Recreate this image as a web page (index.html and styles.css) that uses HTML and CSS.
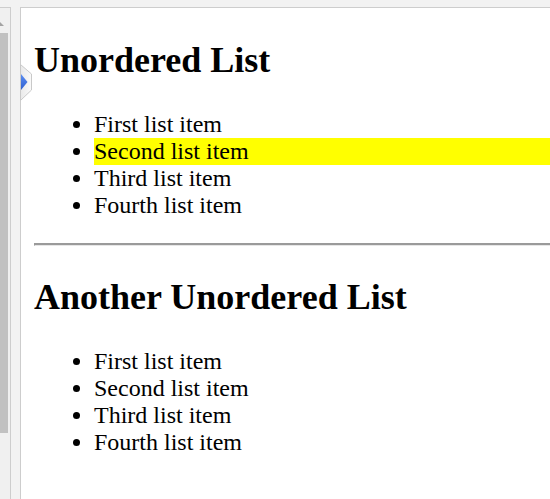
FILE: index.html
```html
<!DOCTYPE html>
<html>
<head>
<meta charset="utf-8">
<title>Lists</title>
<link rel="stylesheet" href="styles.css">
</head>
<body>
<div class="shell">
  <aside class="side">
    <div class="scroll">
      <svg class="arrow-up" width="8" height="6" viewBox="0 0 8 6"><path d="M0 5 L4 1 L8 5 Z" fill="#a3a3a3"/></svg>
      <div class="thumb"></div>
    </div>
  </aside>
  <main class="frame">
    <h2 class="title">Unordered List</h2>
    <ul class="list">
      <li>First list item</li>
      <li class="hl">Second list item</li>
      <li>Third list item</li>
      <li>Fourth list item</li>
    </ul>
    <hr class="rule">
    <h2 class="title">Another Unordered List</h2>
    <ul class="list">
      <li>First list item</li>
      <li>Second list item</li>
      <li>Third list item</li>
      <li>Fourth list item</li>
    </ul>
  </main>
  <svg class="tab" width="13" height="37" viewBox="0 0 13 37">
    <defs>
      <linearGradient id="tabfill" x1="0" y1="0" x2="1" y2="0">
        <stop offset="0" stop-color="#e9e9e9"/>
        <stop offset="1" stop-color="#fafafa"/>
      </linearGradient>
      <linearGradient id="blue" x1="0" y1="0" x2="0" y2="1">
        <stop offset="0" stop-color="#5b8ef2"/>
        <stop offset="1" stop-color="#2f5fd0"/>
      </linearGradient>
    </defs>
    <path d="M0.5 0.5 L11.5 10 L11.5 26 L0.5 36.5 Z" fill="url(#tabfill)" stroke="#c9c9c9"/>
    <path d="M1 10 L7.5 18 L1 26 Z" fill="url(#blue)"/>
  </svg>
</div>
</body>
</html>
```

FILE: styles.css
```css
html, body {
  margin: 0;
  padding: 0;
  height: 100%;
  overflow: hidden;
  background: #f2f2f2;
}

.shell {
  position: relative;
  display: flex;
  align-items: stretch;
  gap: 9px;
  padding-top: 7px;
  height: 100%;
  box-sizing: border-box;
}

.side {
  flex: none;
  width: 10px;
  border-top: 1px solid #cdcdcd;
  border-right: 1px solid #cdcdcd;
  background: #f0f0f0;
}

.scroll {
  display: flex;
  flex-direction: column;
  padding-top: 13px;
}

.arrow-up {
  display: block;
  margin-left: -4px;
}

.thumb {
  margin-top: 6px;
  width: 8px;
  height: 400px;
  background: #c1c1c1;
}

.frame {
  flex: 1;
  min-width: 0;
  border-top: 1px solid #cdcdcd;
  border-left: 1px solid #cdcdcd;
  background: #fff;
  padding: 31px 0 0 13px;
  box-sizing: border-box;
  font-family: "Liberation Serif", "Times New Roman", serif;
  color: #000;
}

.title {
  font-size: 36px;
  font-weight: bold;
  margin: 0 0 30px;
  white-space: nowrap;
}

.list {
  font-size: 24px;
  margin: 0 0 24px;
  padding-left: 60px;
}

.list li {
  white-space: nowrap;
}

.hl {
  background: #ffff00;
}

.rule {
  height: 0;
  margin: 0 0 30px;
  border: none;
  border-top: 2px solid #9a9a9a;
  border-left: 1px solid #9a9a9a;
  border-bottom: 1px solid #e6e6e6;
}

.tab {
  position: absolute;
  left: 20px;
  top: 64px;
}
```
